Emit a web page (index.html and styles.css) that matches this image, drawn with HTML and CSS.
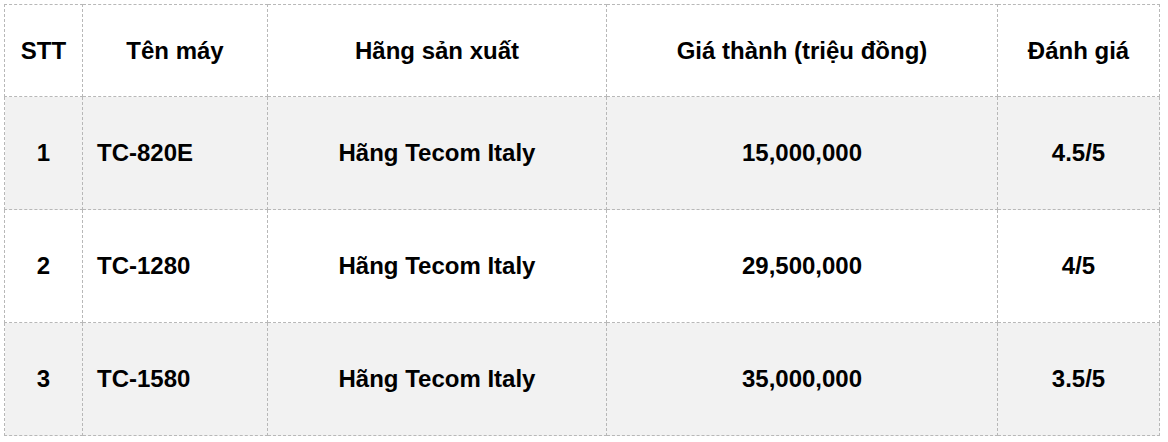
FILE: index.html
```html
<!DOCTYPE html>
<html lang="vi">
<head>
<meta charset="utf-8">
<title>Bảng giá máy</title>
<link rel="stylesheet" href="styles.css">
</head>
<body>
<div class="wrap">
<table class="spec">
  <colgroup>
    <col class="c1"><col class="c2"><col class="c3"><col class="c4"><col class="c5">
  </colgroup>
  <thead>
    <tr class="head">
      <th>STT</th>
      <th>Tên máy</th>
      <th>Hãng sản xuất</th>
      <th>Giá thành (triệu đồng)</th>
      <th>Đánh giá</th>
    </tr>
  </thead>
  <tbody>
    <tr class="row odd">
      <td>1</td>
      <td class="left">TC-820E</td>
      <td>Hãng Tecom Italy</td>
      <td>15,000,000</td>
      <td>4.5/5</td>
    </tr>
    <tr class="row">
      <td>2</td>
      <td class="left">TC-1280</td>
      <td>Hãng Tecom Italy</td>
      <td>29,500,000</td>
      <td>4/5</td>
    </tr>
    <tr class="row odd">
      <td>3</td>
      <td class="left">TC-1580</td>
      <td>Hãng Tecom Italy</td>
      <td>35,000,000</td>
      <td>3.5/5</td>
    </tr>
  </tbody>
</table>
</div>
</body>
</html>
```

FILE: styles.css
```css
html, body {
  margin: 0;
  padding: 0;
  background: #ffffff;
}

.wrap {
  padding: 4px;
}

.spec {
  border-collapse: collapse;
  table-layout: fixed;
  width: 1155px;
  font-family: "Liberation Sans", Arial, sans-serif;
  font-size: 24px;
  font-weight: bold;
  color: #000000;
}

.c1 { width: 78px; }
.c2 { width: 185px; }
.c3 { width: 339px; }
.c4 { width: 391px; }
.c5 { width: 162px; }

.spec th,
.spec td {
  border: 1px dashed #b8b8b8;
  padding: 0 14px;
  text-align: center;
  vertical-align: middle;
  line-height: 28px;
}

.spec th {
  font-weight: bold;
}

.spec td.left {
  text-align: left;
}

.head {
  height: 92px;
}

.row {
  height: 113px;
}

.odd {
  background: #f2f2f2;
}
```
